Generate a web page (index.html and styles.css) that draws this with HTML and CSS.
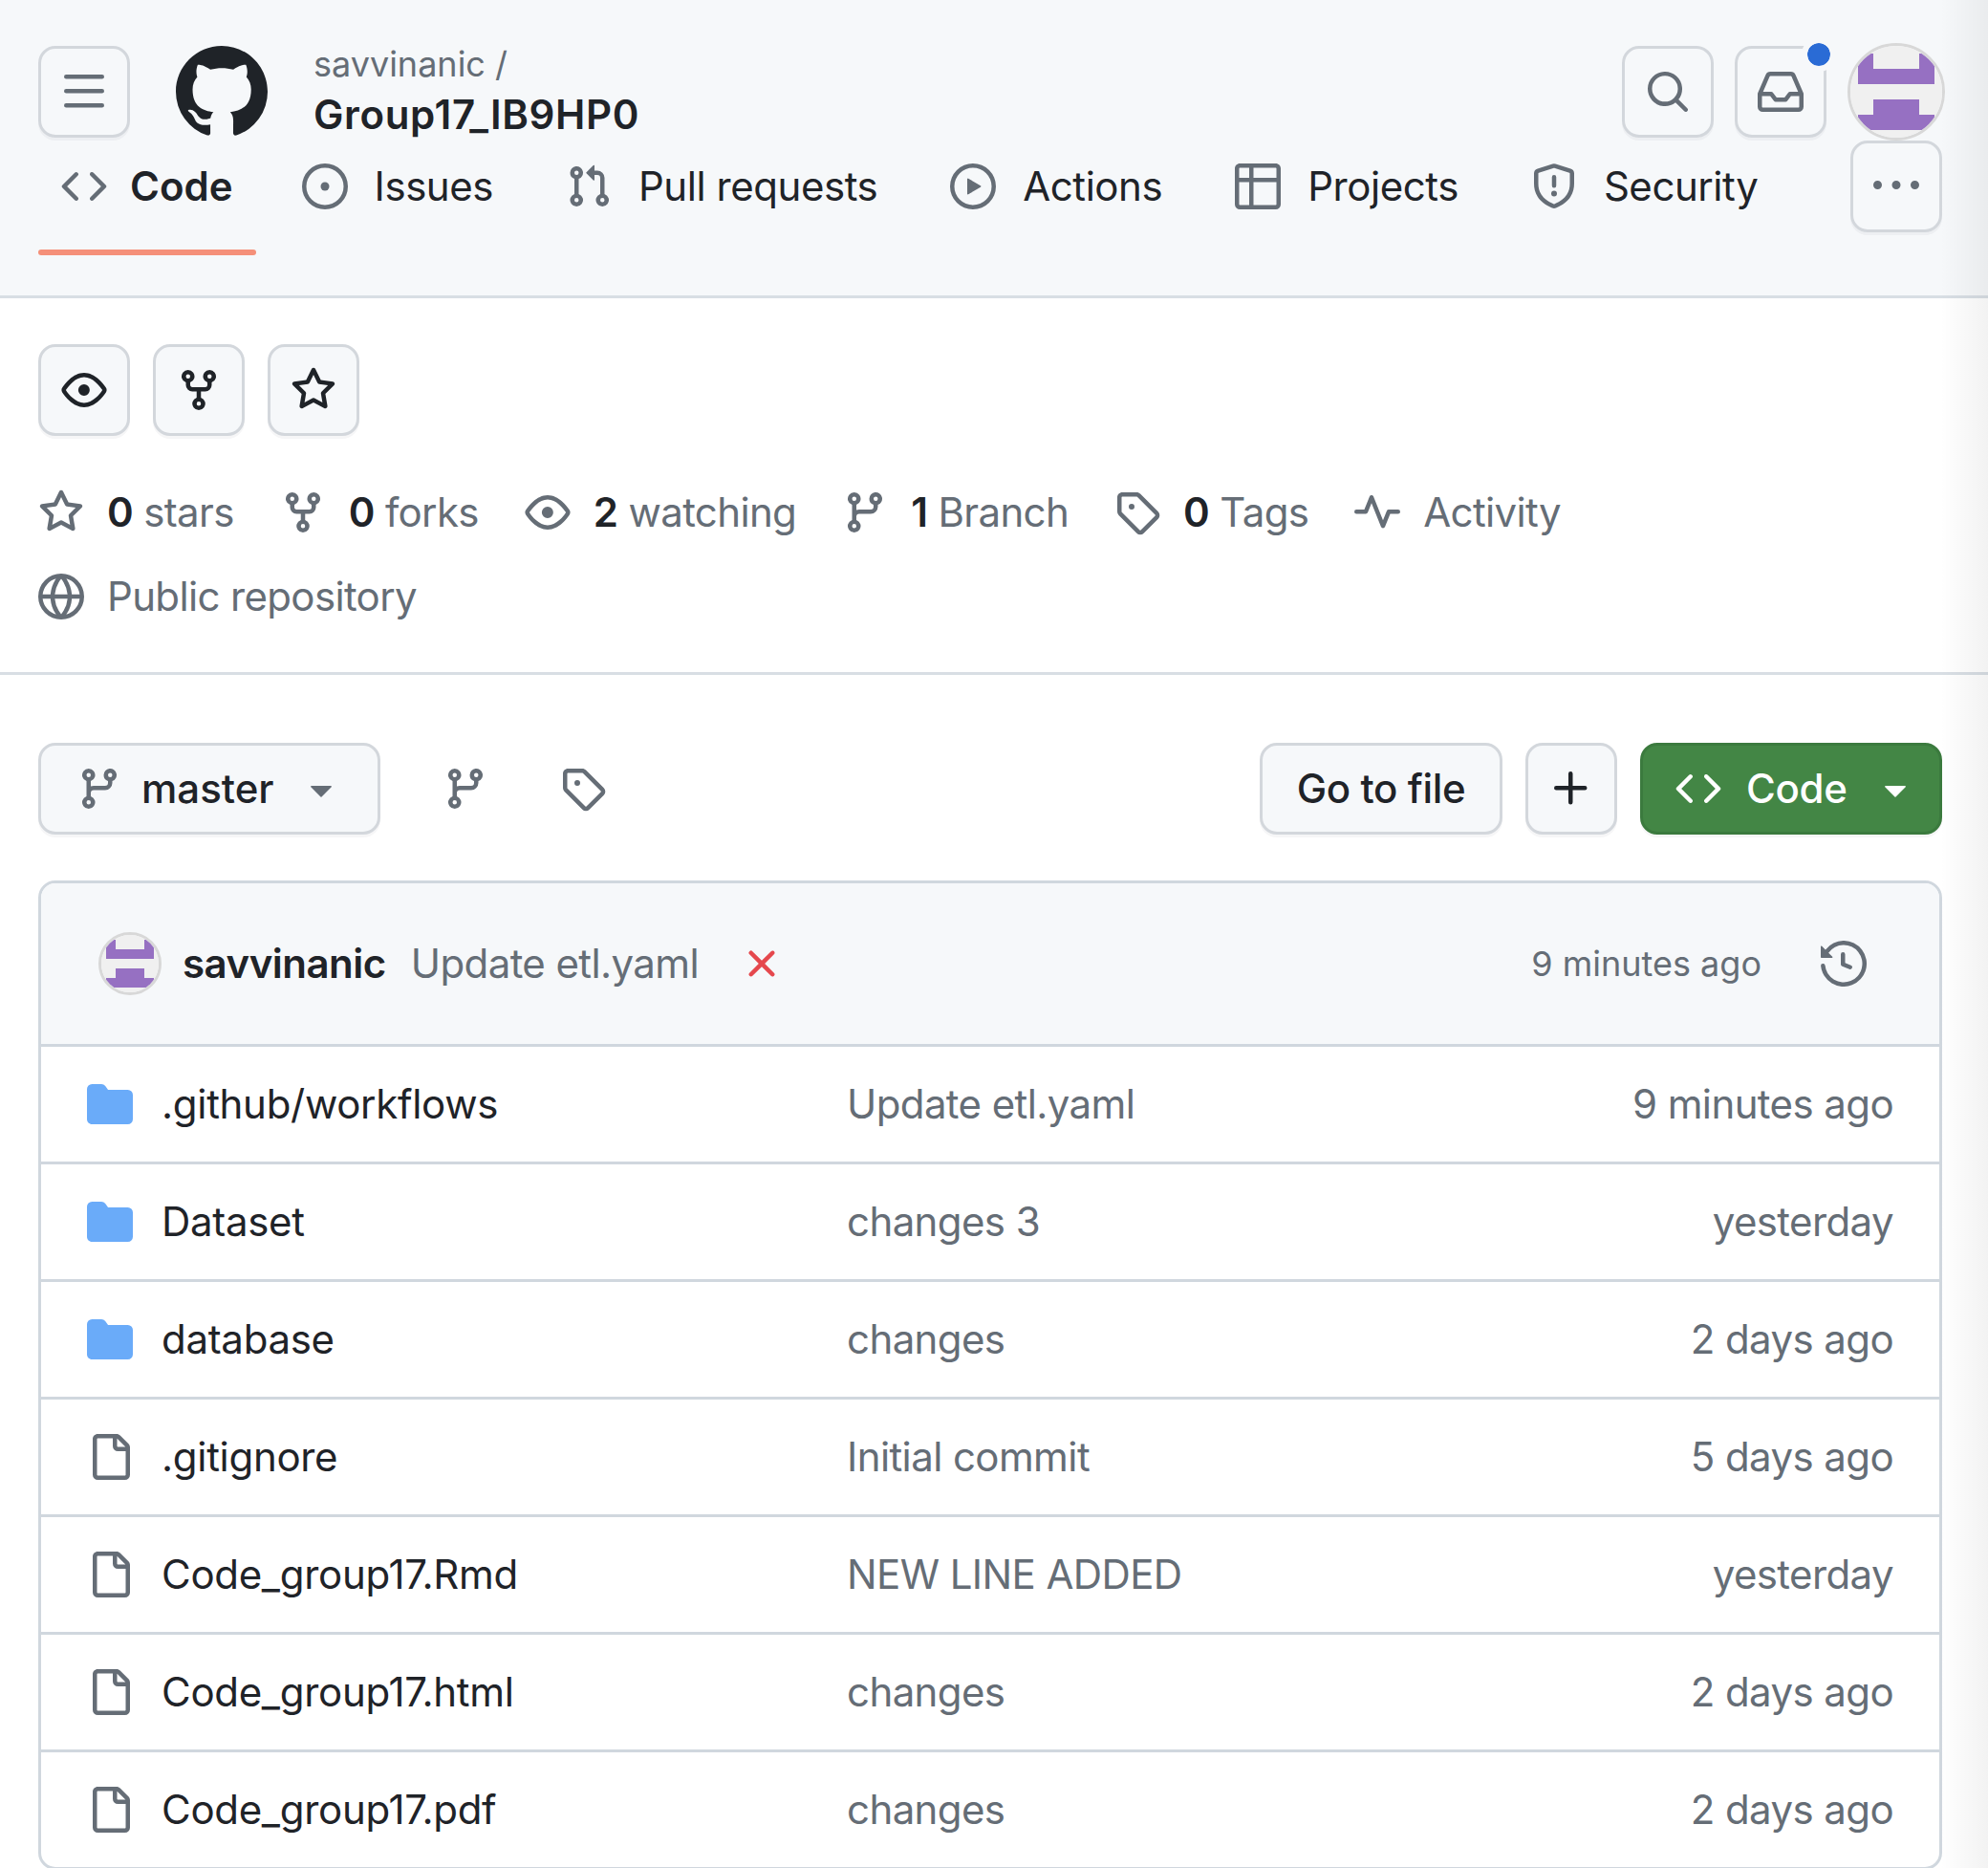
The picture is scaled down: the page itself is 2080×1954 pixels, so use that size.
FILE: index.html
```html
<!DOCTYPE html>
<html lang="en">
<head>
    <meta charset="UTF-8">
    <meta name="viewport" content="width=device-width, initial-scale=1.0">
    <title>savvinanic/Group17_IB9HP0</title>
    <link rel="stylesheet" href="styles.css">
</head>
<body>
    <svg class="sprite" aria-hidden="true">
        <symbol id="i-code" viewBox="0 0 16 16"><path d="m11.28 3.22 4.25 4.25a.75.75 0 0 1 0 1.06l-4.25 4.25a.749.749 0 0 1-1.275-.326.749.749 0 0 1 .215-.734L13.94 8l-3.72-3.72a.749.749 0 0 1 .326-1.275.749.749 0 0 1 .734.215Zm-6.56 0a.751.751 0 0 1 1.042.018.751.751 0 0 1 .018 1.042L2.06 8l3.72 3.72a.749.749 0 0 1-.326 1.275.749.749 0 0 1-.734-.215L.47 8.53a.75.75 0 0 1 0-1.06Z"/></symbol>
        <symbol id="i-issue" viewBox="0 0 16 16"><path d="M8 9.5a1.5 1.5 0 1 0 0-3 1.5 1.5 0 0 0 0 3Z"/><path d="M8 0a8 8 0 1 1 0 16A8 8 0 0 1 8 0ZM1.5 8a6.5 6.5 0 1 0 13 0 6.5 6.5 0 0 0-13 0Z"/></symbol>
        <symbol id="i-pull" viewBox="0 0 16 16"><path d="M1.5 3.25a2.25 2.25 0 1 1 3 2.122v5.256a2.251 2.251 0 1 1-1.5 0V5.372A2.25 2.25 0 0 1 1.5 3.25Zm5.677-.177L9.573.677A.25.25 0 0 1 10 .854V2.5h1A2.5 2.5 0 0 1 13.5 5v5.628a2.251 2.251 0 1 1-1.5 0V5a1 1 0 0 0-1-1h-1v1.646a.25.25 0 0 1-.427.177L7.177 3.427a.25.25 0 0 1 0-.354ZM3.75 2.5a.75.75 0 1 0 0 1.5.75.75 0 0 0 0-1.5Zm0 9.5a.75.75 0 1 0 0 1.5.75.75 0 0 0 0-1.5Zm8.25.75a.75.75 0 1 0 1.5 0 .75.75 0 0 0-1.5 0Z"/></symbol>
        <symbol id="i-play" viewBox="0 0 16 16"><path d="M8 0a8 8 0 1 1 0 16A8 8 0 0 1 8 0ZM1.5 8a6.5 6.5 0 1 0 13 0 6.5 6.5 0 0 0-13 0Zm4.879-2.773 4.264 2.559a.25.25 0 0 1 0 .428l-4.264 2.559A.25.25 0 0 1 6 10.559V5.442a.25.25 0 0 1 .379-.215Z"/></symbol>
        <symbol id="i-table" viewBox="0 0 16 16"><path d="M0 1.75C0 .784.784 0 1.75 0h12.5C15.216 0 16 .784 16 1.75v12.5A1.75 1.75 0 0 1 14.25 16H1.75A1.75 1.75 0 0 1 0 14.25ZM6.5 6.5v8h7.75a.25.25 0 0 0 .25-.25V6.5Zm8-1.5V1.75a.25.25 0 0 0-.25-.25H6.5V5Zm-13 1.5v7.75c0 .138.112.25.25.25H5v-8ZM5 5V1.5H1.75a.25.25 0 0 0-.25.25V5Z"/></symbol>
        <symbol id="i-shield" viewBox="0 0 16 16"><path d="M7.467.133a1.748 1.748 0 0 1 1.066 0l5.25 1.68A1.75 1.75 0 0 1 15 3.48V7c0 1.566-.32 3.182-1.303 4.682-.983 1.498-2.585 2.813-5.032 3.855a1.697 1.697 0 0 1-1.33 0c-2.447-1.042-4.049-2.357-5.032-3.855C1.32 10.182 1 8.566 1 7V3.48a1.75 1.75 0 0 1 1.217-1.667Zm.61 1.429a.25.25 0 0 0-.153 0l-5.25 1.68a.25.25 0 0 0-.174.238V7c0 1.358.275 2.666 1.057 3.86.784 1.194 2.121 2.34 4.366 3.297a.196.196 0 0 0 .154 0c2.245-.956 3.582-2.104 4.366-3.298C13.225 9.666 13.5 8.36 13.5 7V3.48a.251.251 0 0 0-.174-.237l-5.25-1.68ZM8.75 4.75v3a.75.75 0 0 1-1.5 0v-3a.75.75 0 0 1 1.5 0ZM9 10.5a1 1 0 1 1-2 0 1 1 0 0 1 2 0Z"/></symbol>
        <symbol id="i-bars" viewBox="0 0 16 16"><path d="M1 2.75A.75.75 0 0 1 1.75 2h12.5a.75.75 0 0 1 0 1.5H1.75A.75.75 0 0 1 1 2.75Zm0 5A.75.75 0 0 1 1.75 7h12.5a.75.75 0 0 1 0 1.5H1.75A.75.75 0 0 1 1 7.75ZM1.75 12h12.5a.75.75 0 0 1 0 1.5H1.75a.75.75 0 0 1 0-1.5Z"/></symbol>
        <symbol id="i-search" viewBox="0 0 16 16"><path d="M10.68 11.74a6 6 0 0 1-7.922-8.982 6 6 0 0 1 8.982 7.922l3.04 3.04a.749.749 0 0 1-.326 1.275.749.749 0 0 1-.734-.215ZM11.5 7a4.499 4.499 0 1 0-8.997 0A4.499 4.499 0 0 0 11.5 7Z"/></symbol>
        <symbol id="i-inbox" viewBox="0 0 16 16"><path d="M2.8 2.06A1.75 1.75 0 0 1 4.41 1h7.18c.7 0 1.333.417 1.61 1.06l2.74 6.395c.04.093.06.194.06.295v4.5A1.75 1.75 0 0 1 14.25 15H1.75A1.75 1.75 0 0 1 0 13.25v-4.5c0-.101.02-.202.06-.295Zm1.61.44a.25.25 0 0 0-.23.152L1.887 8H4.75a.75.75 0 0 1 .6.3L6.625 10h2.75l1.275-1.7a.75.75 0 0 1 .6-.3h2.863L11.82 2.652a.25.25 0 0 0-.23-.152Zm10.09 7h-2.875l-1.275 1.7a.75.75 0 0 1-.6.3h-3.5a.75.75 0 0 1-.6-.3L4.375 9.5H1.5v3.75c0 .138.112.25.25.25h12.5a.25.25 0 0 0 .25-.25Z"/></symbol>
        <symbol id="i-kebab" viewBox="0 0 16 16"><path d="M8 9a1.5 1.5 0 1 0 0-3 1.5 1.5 0 0 0 0 3ZM1.5 9a1.5 1.5 0 1 0 0-3 1.5 1.5 0 0 0 0 3Zm13 0a1.5 1.5 0 1 0 0-3 1.5 1.5 0 0 0 0 3Z"/></symbol>
        <symbol id="i-eye" viewBox="0 0 16 16"><path d="M8 2c1.981 0 3.671.992 4.933 2.078 1.27 1.091 2.187 2.345 2.637 3.023a1.62 1.62 0 0 1 0 1.798c-.45.678-1.367 1.932-2.637 3.023C11.67 13.008 9.981 14 8 14c-1.981 0-3.671-.992-4.933-2.078C1.797 10.83.88 9.576.43 8.898a1.62 1.62 0 0 1 0-1.798c.45-.677 1.367-1.931 2.637-3.022C4.33 2.992 6.019 2 8 2ZM1.679 7.932a.12.12 0 0 0 0 .136c.411.622 1.241 1.75 2.366 2.717C5.176 11.758 6.527 12.5 8 12.5c1.473 0 2.825-.742 3.955-1.715 1.124-.967 1.954-2.096 2.366-2.717a.12.12 0 0 0 0-.136c-.412-.621-1.242-1.75-2.366-2.717C10.824 4.242 9.473 3.5 8 3.5c-1.473 0-2.825.742-3.955 1.715-1.124.967-1.954 2.096-2.366 2.717ZM8 10a2 2 0 1 1-.001-3.999A2 2 0 0 1 8 10Z"/></symbol>
        <symbol id="i-fork" viewBox="0 0 16 16"><path d="M5 5.372v.878c0 .414.336.75.75.75h4.5a.75.75 0 0 0 .75-.75v-.878a2.25 2.25 0 1 1 1.5 0v.878a2.25 2.25 0 0 1-2.25 2.25h-1.5v2.128a2.251 2.251 0 1 1-1.5 0V8.5h-1.5A2.25 2.25 0 0 1 3.5 6.25v-.878a2.25 2.25 0 1 1 1.5 0ZM5 3.25a.75.75 0 1 0-1.5 0 .75.75 0 0 0 1.5 0Zm6.75.75a.75.75 0 1 0 0-1.5.75.75 0 0 0 0 1.5Zm-3 8.75a.75.75 0 1 0-1.5 0 .75.75 0 0 0 1.5 0Z"/></symbol>
        <symbol id="i-star" viewBox="0 0 16 16"><path d="M8 .25a.75.75 0 0 1 .673.418l1.882 3.815 4.21.612a.75.75 0 0 1 .416 1.279l-3.046 2.97.719 4.192a.751.751 0 0 1-1.088.791L8 12.347l-3.766 1.98a.75.75 0 0 1-1.088-.79l.72-4.194L.818 6.374a.75.75 0 0 1 .416-1.28l4.21-.611L7.327.668A.75.75 0 0 1 8 .25Zm0 2.445L6.615 5.5a.75.75 0 0 1-.564.41l-3.097.45 2.24 2.184a.75.75 0 0 1 .216.664l-.528 3.084 2.769-1.456a.75.75 0 0 1 .698 0l2.77 1.456-.53-3.084a.75.75 0 0 1 .216-.664l2.24-2.183-3.096-.45a.75.75 0 0 1-.564-.41L8 2.694Z"/></symbol>
        <symbol id="i-branch" viewBox="0 0 16 16"><path d="M9.5 3.25a2.25 2.25 0 1 1 3 2.122V6A2.5 2.5 0 0 1 10 8.5H6a1 1 0 0 0-1 1v1.128a2.251 2.251 0 1 1-1.5 0V5.372a2.25 2.25 0 1 1 1.5 0v1.836A2.493 2.493 0 0 1 6 7h4a1 1 0 0 0 1-1v-.628A2.25 2.25 0 0 1 9.5 3.25Zm-6 0a.75.75 0 1 0 1.5 0 .75.75 0 0 0-1.5 0Zm8.25-.75a.75.75 0 1 0 0 1.5.75.75 0 0 0 0-1.5ZM4.25 12a.75.75 0 1 0 0 1.5.75.75 0 0 0 0-1.5Z"/></symbol>
        <symbol id="i-tag" viewBox="0 0 16 16"><path d="M1 7.775V2.75C1 1.784 1.784 1 2.75 1h5.025c.464 0 .91.184 1.238.513l6.25 6.25a1.75 1.75 0 0 1 0 2.474l-5.026 5.026a1.75 1.75 0 0 1-2.474 0l-6.25-6.25A1.752 1.752 0 0 1 1 7.775Zm1.5 0c0 .066.026.13.073.177l6.25 6.25a.25.25 0 0 0 .354 0l5.025-5.025a.25.25 0 0 0 0-.354l-6.25-6.25a.25.25 0 0 0-.177-.073H2.75a.25.25 0 0 0-.25.25ZM6 5a1 1 0 1 1 0 2 1 1 0 0 1 0-2Z"/></symbol>
        <symbol id="i-pulse" viewBox="0 0 16 16"><path d="M6 2c.306 0 .582.187.696.471L10 10.731l1.304-3.26A.751.751 0 0 1 12 7h3.25a.75.75 0 0 1 0 1.5h-2.742l-1.812 4.528a.751.751 0 0 1-1.392 0L6 4.77 4.696 8.03A.75.75 0 0 1 4 8.5H.75a.75.75 0 0 1 0-1.5h2.742l1.812-4.529A.751.751 0 0 1 6 2Z"/></symbol>
        <symbol id="i-globe" viewBox="0 0 16 16"><path d="M8 0a8 8 0 1 1 0 16A8 8 0 0 1 8 0ZM5.78 8.75a9.64 9.64 0 0 0 1.363 4.177c.255.426.542.832.857 1.215.245-.296.551-.705.857-1.215A9.64 9.64 0 0 0 10.22 8.75Zm4.44-1.5a9.64 9.64 0 0 0-1.363-4.177c-.307-.51-.612-.919-.857-1.215a9.927 9.927 0 0 0-.857 1.215A9.64 9.64 0 0 0 5.78 7.25Zm-5.944 1.5H1.543a6.507 6.507 0 0 0 4.666 5.5c-.123-.181-.24-.365-.352-.552-.715-1.192-1.437-2.874-1.581-4.948Zm-2.733-1.5h2.733c.144-2.074.866-3.756 1.58-4.948.12-.197.237-.381.353-.552a6.507 6.507 0 0 0-4.666 5.5Zm10.181 1.5c-.144 2.074-.866 3.756-1.58 4.948-.12.197-.237.381-.353.552a6.507 6.507 0 0 0 4.666-5.5Zm2.733-1.5a6.507 6.507 0 0 0-4.666-5.5c.123.181.24.365.353.552.714 1.192 1.436 2.874 1.58 4.948Z"/></symbol>
        <symbol id="i-caret" viewBox="0 0 16 16"><path d="m4.427 7.427 3.396 3.396a.25.25 0 0 0 .354 0l3.396-3.396A.25.25 0 0 0 11.396 7H4.604a.25.25 0 0 0-.177.427Z"/></symbol>
        <symbol id="i-plus" viewBox="0 0 16 16"><path d="M7.75 2a.75.75 0 0 1 .75.75V7h4.25a.75.75 0 0 1 0 1.5H8.5v4.25a.75.75 0 0 1-1.5 0V8.5H2.75a.75.75 0 0 1 0-1.5H7V2.75A.75.75 0 0 1 7.75 2Z"/></symbol>
        <symbol id="i-x" viewBox="0 0 16 16"><path d="M3.72 3.72a.75.75 0 0 1 1.06 0L8 6.94l3.22-3.22a.749.749 0 0 1 1.275.326.749.749 0 0 1-.215.734L9.06 8l3.22 3.22a.749.749 0 0 1-.326 1.275.749.749 0 0 1-.734-.215L8 9.06l-3.22 3.22a.751.751 0 0 1-1.042-.018.751.751 0 0 1-.018-1.042L6.94 8 3.72 4.78a.75.75 0 0 1 0-1.06Z"/></symbol>
        <symbol id="i-history" viewBox="0 0 16 16"><path d="m.427 1.927 1.215 1.215a8.002 8.002 0 1 1-1.6 5.685.75.75 0 1 1 1.493-.154 6.5 6.5 0 1 0 1.18-4.458l1.358 1.358A.25.25 0 0 1 3.896 6H.25A.25.25 0 0 1 0 5.75V2.104a.25.25 0 0 1 .427-.177ZM7.75 4a.75.75 0 0 1 .75.75v2.992l2.028.812a.75.75 0 0 1-.557 1.392l-2.5-1A.751.751 0 0 1 7 8.25v-3.5A.75.75 0 0 1 7.75 4Z"/></symbol>
        <symbol id="i-file" viewBox="0 0 16 16"><path d="M2 1.75C2 .784 2.784 0 3.75 0h6.586c.464 0 .909.184 1.237.513l2.914 2.914c.329.328.513.773.513 1.237v9.586A1.75 1.75 0 0 1 13.25 16h-9.5A1.75 1.75 0 0 1 2 14.25Zm1.75-.25a.25.25 0 0 0-.25.25v12.5c0 .138.112.25.25.25h9.5a.25.25 0 0 0 .25-.25V6h-2.75A1.75 1.75 0 0 1 9 4.25V1.5Zm6.75.062V4.25c0 .138.112.25.25.25h2.688l-.011-.013-2.914-2.914-.013-.011Z"/></symbol>
        <symbol id="i-folder" viewBox="0 0 16 16"><path d="M1.75 1A1.75 1.75 0 0 0 0 2.75v10.5C0 14.216.784 15 1.75 15h12.5A1.75 1.75 0 0 0 16 13.25v-8.5A1.75 1.75 0 0 0 14.25 3H7.5a.25.25 0 0 1-.2-.1l-.9-1.2C6.07 1.26 5.55 1 5 1H1.75Z"/></symbol>
        <symbol id="i-github" viewBox="0 0 16 16"><path d="M8 0c4.42 0 8 3.58 8 8a8.013 8.013 0 0 1-5.45 7.59c-.4.08-.55-.17-.55-.38 0-.27.01-1.13.01-2.2 0-.75-.25-1.23-.54-1.48 1.78-.2 3.65-.88 3.65-3.95 0-.88-.31-1.59-.82-2.15.08-.2.36-1.02-.08-2.12 0 0-.67-.22-2.2.82-.64-.18-1.32-.27-2-.27-.68 0-1.36.09-2 .27-1.53-1.03-2.2-.82-2.2-.82-.44 1.1-.16 1.92-.08 2.12-.51.56-.82 1.28-.82 2.15 0 3.06 1.86 3.75 3.64 3.95-.23.2-.44.55-.51 1.07-.46.21-1.61.55-2.33-.66-.15-.24-.6-.83-1.23-.82-.67.01-.27.38.01.53.34.19.73.9.82 1.13.16.45.68 1.31 2.69.94 0 .67.01 1.3.01 1.49 0 .21-.15.45-.55.38A7.995 7.995 0 0 1 0 8c0-4.42 3.58-8 8-8Z"/></symbol>
        <symbol id="i-avatar" viewBox="0 0 420 420"><rect width="420" height="420" fill="#f0f0f0"/><path fill="#9670c2" d="M35 35h70v70h210V35h70v140H35ZM105 245h210v70h70v70H35v-70h70Z"/></symbol>
    </svg>

    <header class="top">
        <div class="top-row">
            <button class="btn btn-icon btn-clear"><svg class="icon muted"><use href="#i-bars"/></svg></button>
            <svg class="logo"><use href="#i-github"/></svg>
            <div class="context">
                <span class="owner">savvinanic /</span>
                <span class="repo-name">Group17_IB9HP0</span>
            </div>
            <div class="top-actions">
                <button class="btn btn-icon btn-clear"><svg class="icon muted"><use href="#i-search"/></svg></button>
                <div class="inbox">
                    <button class="btn btn-icon btn-clear"><svg class="icon muted"><use href="#i-inbox"/></svg></button>
                    <span class="dot"></span>
                </div>
                <svg class="avatar avatar-big"><use href="#i-avatar"/></svg>
            </div>
        </div>
        <nav class="tabs">
            <a class="tab active"><svg class="icon muted"><use href="#i-code"/></svg><span>Code</span></a>
            <a class="tab"><svg class="icon muted"><use href="#i-issue"/></svg><span>Issues</span></a>
            <a class="tab"><svg class="icon muted"><use href="#i-pull"/></svg><span>Pull requests</span></a>
            <a class="tab"><svg class="icon muted"><use href="#i-play"/></svg><span>Actions</span></a>
            <a class="tab"><svg class="icon muted"><use href="#i-table"/></svg><span>Projects</span></a>
            <a class="tab"><svg class="icon muted"><use href="#i-shield"/></svg><span>Security</span></a>
            <button class="btn btn-icon btn-clear tab-more"><svg class="icon muted"><use href="#i-kebab"/></svg></button>
        </nav>
    </header>

    <section class="repo-head">
        <div class="repo-buttons">
            <button class="btn btn-icon"><svg class="icon"><use href="#i-eye"/></svg></button>
            <button class="btn btn-icon"><svg class="icon"><use href="#i-fork"/></svg></button>
            <button class="btn btn-icon"><svg class="icon"><use href="#i-star"/></svg></button>
        </div>
        <ul class="stats">
            <li><svg class="icon muted"><use href="#i-star"/></svg><span><b>0</b> stars</span></li>
            <li><svg class="icon muted"><use href="#i-fork"/></svg><span><b>0</b> forks</span></li>
            <li><svg class="icon muted"><use href="#i-eye"/></svg><span><b>2</b> watching</span></li>
            <li><svg class="icon muted"><use href="#i-branch"/></svg><span><b>1</b> Branch</span></li>
            <li><svg class="icon muted"><use href="#i-tag"/></svg><span><b>0</b> Tags</span></li>
            <li><svg class="icon muted"><use href="#i-pulse"/></svg><span>Activity</span></li>
        </ul>
        <div class="stats visibility">
            <svg class="icon muted"><use href="#i-globe"/></svg><span>Public repository</span>
        </div>
    </section>

    <main class="code-view">
        <div class="toolbar">
            <button class="btn branch-btn">
                <svg class="icon muted"><use href="#i-branch"/></svg>
                <span>master</span>
                <svg class="icon muted"><use href="#i-caret"/></svg>
            </button>
            <svg class="icon muted toolbar-link"><use href="#i-branch"/></svg>
            <svg class="icon muted toolbar-link"><use href="#i-tag"/></svg>
            <div class="toolbar-right">
                <button class="btn go-file">Go to file</button>
                <button class="btn btn-icon"><svg class="icon"><use href="#i-plus"/></svg></button>
                <button class="btn btn-green">
                    <svg class="icon"><use href="#i-code"/></svg>
                    <span>Code</span>
                    <svg class="icon"><use href="#i-caret"/></svg>
                </button>
            </div>
        </div>

        <div class="files">
            <div class="commit">
                <svg class="avatar avatar-small"><use href="#i-avatar"/></svg>
                <strong class="author">savvinanic</strong>
                <span class="muted-text">Update etl.yaml</span>
                <svg class="icon fail"><use href="#i-x"/></svg>
                <span class="commit-time">9 minutes ago</span>
                <svg class="icon muted"><use href="#i-history"/></svg>
            </div>
            <div class="row"><svg class="icon folder"><use href="#i-folder"/></svg><span class="name">.github/workflows</span><span class="muted-text">Update etl.yaml</span><span class="age">9 minutes ago</span></div>
            <div class="row"><svg class="icon folder"><use href="#i-folder"/></svg><span class="name">Dataset</span><span class="muted-text">changes 3</span><span class="age">yesterday</span></div>
            <div class="row"><svg class="icon folder"><use href="#i-folder"/></svg><span class="name">database</span><span class="muted-text">changes</span><span class="age">2 days ago</span></div>
            <div class="row"><svg class="icon muted"><use href="#i-file"/></svg><span class="name">.gitignore</span><span class="muted-text">Initial commit</span><span class="age">5 days ago</span></div>
            <div class="row"><svg class="icon muted"><use href="#i-file"/></svg><span class="name">Code_group17.Rmd</span><span class="muted-text">NEW LINE ADDED</span><span class="age">yesterday</span></div>
            <div class="row"><svg class="icon muted"><use href="#i-file"/></svg><span class="name">Code_group17.html</span><span class="muted-text">changes</span><span class="age">2 days ago</span></div>
            <div class="row"><svg class="icon muted"><use href="#i-file"/></svg><span class="name">Code_group17.pdf</span><span class="muted-text">changes</span><span class="age">2 days ago</span></div>
        </div>
    </main>

    <div class="scroll-edge"></div>
</body>
</html>
```

FILE: styles.css
```css
* {
    box-sizing: border-box;
}

html, body {
    margin: 0;
    padding: 0;
}

body {
    width: 2080px;
    height: 1954px;
    overflow: hidden;
    position: relative;
    background: #fff;
    color: #1f2328;
    font-family: Inter, "Liberation Sans", sans-serif;
    font-size: 42px;
    line-height: 60px;
}

.sprite {
    display: none;
}

.icon {
    width: 48px;
    height: 48px;
    flex: none;
    fill: currentColor;
}

.muted {
    color: #656d76;
}

.muted-text {
    color: #656d76;
    letter-spacing: -0.6px;
}

/* buttons */
.btn {
    display: inline-flex;
    align-items: center;
    justify-content: center;
    height: 96px;
    padding: 0;
    border: 3px solid #d3d7dc;
    border-radius: 18px;
    background: #f6f8fa;
    color: inherit;
    font: inherit;
    box-shadow: 0 3px 0 rgba(31, 35, 40, .04);
}

.btn-icon {
    width: 96px;
}

.btn-clear {
    background: transparent;
}

/* top bar */
.top {
    height: 312px;
    background: #f6f8fa;
    border-bottom: 3px solid #d8dee4;
}

.top-row {
    display: flex;
    align-items: center;
    height: 102px;
    margin-top: 0;
    padding: 0 45px 0 40px;
    position: relative;
    top: 45px;
}

.logo {
    width: 96px;
    height: 96px;
    margin-left: 48px;
    fill: #1f2328;
}

.context {
    display: flex;
    flex-direction: column;
    margin-left: 48px;
}

.owner {
    color: #656d76;
    font-size: 36px;
    line-height: 42px;
}

.repo-name {
    margin-top: 5px;
    font-size: 42px;
    font-weight: 600;
    line-height: 54px;
    letter-spacing: .65px;
}

.top-actions {
    display: flex;
    align-items: center;
    margin-left: auto;
    gap: 22px;
}

.inbox {
    position: relative;
    display: flex;
}

.dot {
    position: absolute;
    top: -9px;
    right: -10px;
    width: 36px;
    height: 36px;
    border: 6px solid #f6f8fa;
    border-radius: 50%;
    background: #2a6bd5;
    background-clip: padding-box;
}

.avatar {
    flex: none;
    border-radius: 50%;
    border: 3px solid #d8d8d8;
}

.avatar-big {
    width: 102px;
    height: 102px;
}

.avatar-small {
    width: 66px;
    height: 66px;
}

/* tabs */
.tabs {
    display: flex;
    align-items: center;
    height: 132px;
    margin-top: 174px;
    padding: 0 48px 0 40px;
    gap: 24px;
    letter-spacing: -0.45px;
}

.top-row + .tabs {
    margin-top: 27px;
    position: relative;
    top: 45px;
    margin-top: -18px;
}

.tab {
    position: relative;
    display: flex;
    align-items: center;
    gap: 28px;
    height: 132px;
    padding: 0 28px 0 24px;
}

.tab.active {
    gap: 24px;
    padding: 0 24px;
    font-weight: 600;
    letter-spacing: 0;
}

.tab.active::after {
    content: '';
    position: absolute;
    left: 0;
    right: 0;
    bottom: -6px;
    height: 6px;
    border-radius: 6px;
    background: #f59079;
}

.tab-more {
    margin-left: auto;
}

/* repo header */
.repo-head {
    padding: 48px 40px 0;
    height: 394px;
    border-bottom: 3px solid #d8dee4;
}

.repo-buttons {
    display: flex;
    gap: 24px;
}

.stats {
    display: flex;
    align-items: center;
    gap: 48px;
    list-style: none;
    margin: 36px 0 0;
    padding: 0;
    height: 88px;
    color: #656d76;
    letter-spacing: -0.65px;
}

.stats li {
    display: flex;
    align-items: center;
    gap: 24px;
}

.stats b {
    color: #1f2328;
    font-weight: 600;
}

.visibility {
    margin-top: 0;
    gap: 24px;
}

/* branch toolbar */
.code-view {
    padding: 71px 48px 0 40px;
}

.toolbar {
    display: flex;
    align-items: center;
    height: 96px;
    margin-bottom: 48px;
}

.branch-btn {
    width: 358px;
    padding: 0 0 0 37px;
    justify-content: flex-start;
    gap: 20px;
    font-weight: 500;
}

.branch-btn span {
    margin-right: 5px;
}

.toolbar-link {
    margin-left: 65px;
}

.toolbar-link + .toolbar-link {
    margin-left: 75px;
}

.toolbar-right {
    display: flex;
    margin-left: auto;
    gap: 24px;
}

.go-file {
    width: 254px;
    font-weight: 500;
    letter-spacing: -0.4px;
}

.btn-green {
    width: 316px;
    padding-left: 34px;
    justify-content: flex-start;
    gap: 26px;
    border-color: #3b7a3e;
    background: #438645;
    color: #fff;
    font-weight: 500;
    letter-spacing: -0.3px;
}

/* file table */
.files {
    border: 3px solid #d0d7de;
    border-radius: 18px;
    overflow: hidden;
}

.commit {
    display: flex;
    align-items: center;
    height: 168px;
    padding: 0 76px 0 60px;
    background: #f6f8fa;
}

.author {
    margin-left: 22px;
    font-weight: 600;
    letter-spacing: -0.5px;
}

.commit .muted-text {
    margin-left: 26px;
}

.fail {
    margin-left: 42px;
    color: #e5484d;
}

.commit-time {
    margin-left: auto;
    margin-right: 62px;
    color: #656d76;
    font-size: 36px;
}

.row {
    display: grid;
    grid-template-columns: 48px 747px 1fr auto;
    align-items: center;
    height: 123px;
    padding: 0 48px;
    border-top: 3px solid #d0d7de;
}

.name {
    margin-left: 30px;
    letter-spacing: -0.3px;
}

.age {
    color: #656d76;
    letter-spacing: -0.6px;
}

.folder {
    color: #6aabf9;
}

.scroll-edge {
    position: absolute;
    top: 0;
    right: 0;
    bottom: 0;
    width: 50px;
    background: linear-gradient(to right, rgba(0, 0, 0, 0), rgba(0, 0, 0, .05));
}
```
